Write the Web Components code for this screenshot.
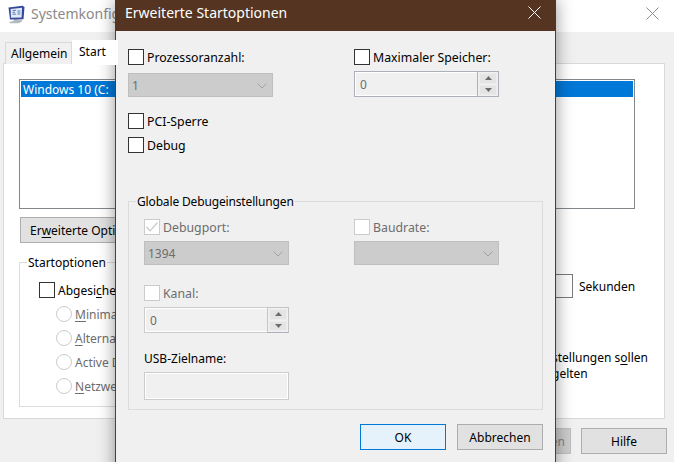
<!DOCTYPE html>
<html><head><meta charset="utf-8"><style>
html,body{margin:0;padding:0;width:674px;height:462px;overflow:hidden;background:#f0f0f0}
body{font:12px "Noto Sans","Open Sans",sans-serif;color:#000}
</style></head><body>
<sys-window>
  <sys-tabs slot="tabs"></sys-tabs>
</sys-window>
<start-dialog></start-dialog>
<script>
const base=`*,:host{box-sizing:border-box}`;
function def(name,html){customElements.define(name,class extends HTMLElement{connectedCallback(){if(this.shadowRoot)return;const r=this.attachShadow({mode:'open'});r.innerHTML=html(this);}});}

def('win-check',e=>`<style>${base}
:host{display:flex;align-items:center;gap:3px;height:16px;line-height:16px;font-size:12.3px;white-space:nowrap}
.b{width:16px;height:16px;border:1px solid #333;background:#fff;flex:none;display:block}
.t{padding-top:2px}
:host([disabled]) .b{border-color:#ccc}
:host([disabled]){color:#6d6d6d}
svg{display:block}
</style><span class="b">${e.hasAttribute('checked')?'<svg width="14" height="14" viewBox="0 0 14 14"><path d="M1.5 7 5 10.8 12.5 2.5" fill="none" stroke="#c8c8c8" stroke-width="1.2"/></svg>':''}</span><span class="t"><slot></slot></span>`);

def('win-radio',e=>`<style>${base}
:host{display:flex;align-items:center;gap:3px;height:16px;line-height:16px;color:#6d6d6d;white-space:nowrap}
.r{width:16px;height:16px;border:1px solid #ccc;border-radius:50%;background:#fff;flex:none}
.t{padding-top:2px}
</style><span class="r"></span><span class="t"><slot></slot></span>`);

def('win-combo',e=>`<style>${base}
:host{display:flex;align-items:center;justify-content:space-between;width:145px;height:24px;background:#ccc;border:1px solid #bfbfbf;color:#6d6d6d;padding:1px 5px 0 3px;line-height:16px}
svg{display:block}
</style><span><slot></slot></span><svg width="10" height="6" viewBox="0 0 10 6"><path d="M.5.5 5 5 9.5.5" fill="none" stroke="#a2a2a2"/></svg>`);

def('win-spin',e=>{const d=e.hasAttribute('dark');return `<style>${base}
:host{display:flex;width:145px;height:26px;border:1px solid ${d?'#acb0b8':'#ccc'};background:#f0f0f0;color:#6d6d6d;line-height:22px}
.t{flex:1;padding:1px 4px 0;border:1px solid #fff;border-right:0}
.s{width:22px;display:flex;flex-direction:column;background:#f0f0f0;border:1px solid ${d?'#acb0b8':'#c4c4c8'};border-bottom-color:#acb0b8;margin:-1px -1px -1px 0;padding:1px;gap:1px;flex:none}
.s span{flex:1;display:flex;align-items:center;justify-content:center;background:#e4e4e4;border:1px solid #ececec}
svg{display:block}
</style><span class="t"><slot></slot></span><span class="s"><span><svg width="7" height="4" viewBox="0 0 7 4"><path d="M3.5 0 7 4H0Z" fill="#6d6d6d"/></svg></span><span><svg width="7" height="4" viewBox="0 0 7 4"><path d="M0 0H7L3.5 4Z" fill="#6d6d6d"/></svg></span></span>`});

def('win-btn',e=>`<style>${base}
:host{display:flex;align-items:center;justify-content:center;width:86px;height:26px;background:#e1e1e1;border:1px solid #adadad;line-height:16px;padding-top:1px;flex:none;white-space:nowrap}
:host([primary]){background:#e5f1fb;border-color:#0078d7}
:host([disabled]){background:#ccc;border-color:#bfbfbf;color:#838383;justify-content:flex-end;padding-right:5px}
:host([left]){justify-content:flex-start;padding-left:9px}
</style><slot></slot>`);

def('group-box',e=>`<style>${base}
:host{display:block;position:relative;border:1px solid #dcdcdc}
.l{position:absolute;top:-8px;left:7px;padding:0 1px;line-height:16px;background:var(--gb,#f0f0f0);white-space:nowrap;letter-spacing:var(--ls,0)}
</style><span class="l">${e.getAttribute('label')}</span><slot></slot>`);

def('sys-tabs',e=>`<style>${base}
:host{display:flex;align-items:flex-end;height:22px;padding-left:2px;position:relative;z-index:1}
.t{height:22px;width:67px;padding:0 5px;border:1px solid #d9d9d9;border-bottom:0;line-height:22px;background:#f0f0f0;flex:none}
.a{height:25px;width:46px;background:#fff;margin-bottom:-1px;padding:0 6px;border-color:#fff;line-height:22px}
</style><span class="t">Allgemein</span><span class="t a">Start</span>`);

def('sys-window',e=>`<style>${base}
:host{display:flex;flex-direction:column;position:absolute;left:0;top:0;width:674px;height:462px;background:#f0f0f0}
.tb{height:32px;background:#fff;display:flex;align-items:center;padding:0 0 6px 7px;gap:6px;font-size:14px;color:#8a8a8a;flex:none;position:relative}
.tb svg.i{margin-top:2px}
.x{position:absolute;left:646px;top:7px}
.body{flex:none;padding:10px 7px 0 3px;height:396px}
.panel{background:#fff;border:1px solid #d9d9d9;height:356px;padding:15px 29px 0 15px;display:flex;flex-direction:column;margin-top:-1px;width:662px}
.list{height:130px;border:1px solid #82878c;padding:1px;flex:none}
.sel{height:16px;background:#0078d7;color:#fff;line-height:18px;padding-left:2px;overflow:hidden}
.row{display:flex;margin-top:8px;flex:none;padding-left:1px}
.main{display:flex;margin-top:19px;justify-content:space-between}
.start{display:block;width:300px;height:145px;--gb:#fff;padding:19px 0 0 19px}
.start .ops{display:flex;flex-direction:column;gap:8px;margin:8px 0 0 17px}
.r{display:flex;flex-direction:column;width:86px}
.to{display:flex;align-items:center;gap:6px;margin-top:12px;white-space:nowrap}
.box{width:24px;height:24px;border:1px solid #7a7a7a;background:#fff;flex:none}
.note{margin-top:52px;margin-left:3px;line-height:16px;white-space:nowrap}
.foot{display:flex;justify-content:flex-end;gap:10px;padding-top:9px;flex:none}
u{text-underline-offset:2px}
</style>
<div class="tb"><svg class="i" width="18" height="19" viewBox="0 0 18 19"><path d="M7 13.5 6.5 16 2.5 17v1.2h9l3.5-1.6V15l-5-.8-.2-1.2Z" fill="#b4b8c0"/><path d="M1.5 2.5 15.5 .8 17.5 2 16.5 14.2 3 14.5Z" fill="#34499c"/><path d="M3.6 3.9 15 2.7 14.6 12.4 4 12.7Z" fill="#e4ebf7"/><path d="M5.5 5.4H9M5.5 7.3H8M5.5 9.2H9" stroke="#5c79bf"/><path d="M10.5 5h2.8v5h-2.8Z" fill="#8fb1e3"/></svg><span>Systemkonfig</span>
<svg class="x" width="13" height="13" viewBox="0 0 13 13"><path d="M.5.5l12 12M12.5.5l-12 12" stroke="#8c8c8c" fill="none"/></svg></div>
<div class="body"><slot name="tabs"></slot>
<div class="panel">
 <div class="list"><div class="sel">Windows 10 (C:</div></div>
 <div class="row"><win-btn left style="width:110px">Er<u>w</u>eiterte Opti</win-btn></div>
 <div class="main">
  <group-box class="start" label="Startoptionen" style="--gb:#fff">
    <win-check style="font-size:12px">Abgesi<u>c</u>he</win-check>
    <div class="ops"><win-radio><u>M</u>inima</win-radio><win-radio><u>A</u>lterna</win-radio><win-radio>Active D</win-radio><win-radio><u>N</u>etzwe</win-radio></div>
  </group-box>
  <div class="r"><div class="to"><span class="box"></span><span>Sekunden</span></div>
  <div class="note">stellungen s<u>o</u>llen<br>gelten</div></div>
 </div>
</div>
<div class="foot"><win-btn disabled>en</win-btn><win-btn>Hilfe</win-btn></div>
</div>`);

def('start-dialog',e=>`<style>${base}
:host{display:flex;flex-direction:column;position:absolute;left:115px;top:0;width:441px;height:480px;background:#f0f0f0;border:1px solid #5a3a26;border-top:0;box-shadow:0 0 16px rgba(0,0,0,.42)}
.tb{height:31px;margin:0 -1px;background:#553521;color:#fff;font-size:14px;display:flex;align-items:center;padding:0 0 7px 10px;position:relative;flex:none}
.x{position:absolute;left:413px;top:6px}
.content{padding:18px 12px 0 12px;flex:none}
.cols{display:grid;grid-template-columns:226px 145px}
.col{display:flex;flex-direction:column;gap:8px}
.col.s{gap:6px}
.mt{margin-top:16px}
.mt8{margin-top:8px}
group-box{margin-top:48px;height:209px;padding:17px 14px 0 15px;display:block;--ls:-.15px}
.inner{display:grid;grid-template-columns:210px 145px}
.usb{line-height:16px;margin-top:11px;padding-top:1px}
.tx{display:block;width:145px;height:28px;border:1px solid #ccc;box-shadow:inset 0 0 0 1px #fff;margin-top:-1px}
.foot{display:flex;justify-content:flex-end;gap:11px;margin-top:14px}
</style>
<div class="tb"><span>Erweiterte Startoptionen</span><svg class="x" width="13" height="13" viewBox="0 0 13 13"><path d="M.5.5l12 12M12.5.5l-12 12" stroke="#fff" fill="none"/></svg></div>
<div class="content">
 <div class="cols">
  <div class="col"><win-check>Prozessoranzahl:</win-check><win-combo>1</win-combo></div>
  <div class="col s"><win-check>Maximaler Speicher:</win-check><win-spin dark>0</win-spin></div>
 </div>
 <win-check class="mt">PCI-Sperre</win-check>
 <win-check class="mt8">Debug</win-check>
 <group-box label="Globale Debugeinstellungen">
  <div class="inner">
   <div class="col s"><win-check disabled checked>Debugport:</win-check><win-combo>1394</win-combo>
     <win-check disabled style="margin-top:14px">Kanal:</win-check><win-spin>0</win-spin>
     <div class="usb">USB-Zielname:</div><span class="tx"></span></div>
   <div class="col s"><win-check disabled>Baudrate:</win-check><win-combo></win-combo></div>
  </div>
 </group-box>
 <div class="foot"><win-btn primary>OK</win-btn><win-btn>Abbrechen</win-btn></div>
</div>`);
</script>
</body></html>
